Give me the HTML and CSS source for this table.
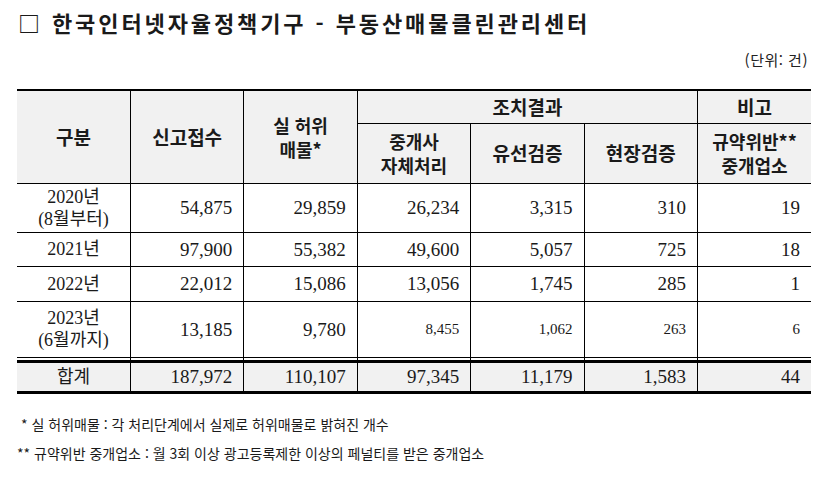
FILE: index.html
```html
<!DOCTYPE html>
<html lang="ko">
<head>
<meta charset="utf-8">
<link rel="stylesheet" href="styles.css">
</head>
<body>
<div class="page">
  <h1 class="title">□ 한국인터넷자율정책기구 - 부동산매물클린관리센터</h1>
  <div class="unit">(단위: 건)</div>
  <table class="grid">
    <colgroup>
      <col class="c1"><col class="c2"><col class="c3"><col class="c4"><col class="c5"><col class="c6"><col class="c7">
    </colgroup>
    <thead>
      <tr class="h1">
        <th rowspan="2">구분</th>
        <th rowspan="2">신고접수</th>
        <th rowspan="2" class="tight">실 허위<br>매물*</th>
        <th colspan="3">조치결과</th>
        <th>비고</th>
      </tr>
      <tr class="h2">
        <th class="tight">중개사<br>자체처리</th>
        <th>유선검증</th>
        <th>현장검증</th>
        <th class="tight">규약위반**<br>중개업소</th>
      </tr>
    </thead>
    <tbody>
      <tr class="r2">
        <td class="yr">2020년<br>(8월부터)</td>
        <td>54,875</td><td>29,859</td><td>26,234</td><td>3,315</td><td>310</td><td>19</td>
      </tr>
      <tr class="r1">
        <td class="yr">2021년</td>
        <td>97,900</td><td>55,382</td><td>49,600</td><td>5,057</td><td>725</td><td>18</td>
      </tr>
      <tr class="r1b">
        <td class="yr">2022년</td>
        <td>22,012</td><td>15,086</td><td>13,056</td><td>1,745</td><td>285</td><td>1</td>
      </tr>
      <tr class="r3">
        <td class="yr">2023년<br>(6월까지)</td>
        <td>13,185</td><td>9,780</td><td class="sm">8,455</td><td class="sm">1,062</td><td class="sm">263</td><td class="sm">6</td>
      </tr>
      <tr class="gap">
        <td></td><td></td><td></td><td></td><td></td><td></td><td></td>
      </tr>
      <tr class="total">
        <td class="yr">합계</td>
        <td>187,972</td><td>110,107</td><td>97,345</td><td>11,179</td><td>1,583</td><td>44</td>
      </tr>
    </tbody>
  </table>
  <div class="notes">
    <p class="note n1">* 실 허위매물 : 각 처리단계에서 실제로 허위매물로 밝혀진 개수</p>
    <p class="note n2">** 규약위반 중개업소 : 월 3회 이상 광고등록제한 이상의 페널티를 받은 중개업소</p>
  </div>
</div>
</body>
</html>
```
FILE: styles.css
```css
html, body {
  margin: 0;
  padding: 0;
  background: #ffffff;
}
.page {
  width: 824px;
  height: 478px;
  padding: 0 13px 0 17px;
  box-sizing: border-box;
  color: #111;
  font-family: "Liberation Serif", "Noto Sans CJK KR", serif;
}
.title {
  margin: 0;
  padding: 8px 0 0 1px;
  height: 34px;
  box-sizing: border-box;
  font-family: "Noto Sans CJK KR", sans-serif;
  font-size: 22px;
  font-weight: 700;
  line-height: 28px;
  letter-spacing: 2.9px;
  color: #1a1a1a;
  white-space: nowrap;
}
.unit {
  text-align: right;
  font-family: "Noto Sans CJK KR", sans-serif;
  font-size: 15px;
  line-height: 18px;
  letter-spacing: 0.5px;
  padding: 17px 3px 0 0;
  height: 55px;
  box-sizing: border-box;
  color: #222;
}
.grid {
  width: 794px;
  border-collapse: collapse;
  table-layout: fixed;
  border-top: 2px solid #000;
  border-bottom: 3px solid #000;
}
.grid th, .grid td {
  border: 1px solid #000;
  padding: 0;
}
.grid tr > :first-child { border-left: none; }
.grid tr > :last-child { border-right: none; }
.grid tr.h2 > :first-child { border-left: 1px solid #000; }
.grid th {
  background: #f1f1f1;
  font-family: "Noto Sans CJK KR", sans-serif;
  font-weight: 700;
  font-size: 19px;
  line-height: 22px;
  color: #1a1a1a;
  text-align: center;
}
.grid th.tight {
  font-size: 18px;
  line-height: 24px;
}
.h1 { height: 33px; }
.h2 { height: 60px; }
.grid td {
  font-size: 19px;
  line-height: 21px;
  text-align: right;
  padding-right: 11px;
  color: #1a1a1a;
}
.grid td.yr {
  text-align: center;
  padding-right: 0;
  font-size: 18px;
  line-height: 22px;
}
.grid td.sm {
  font-size: 15px;
}
.r2 { height: 49px; }
.r1 { height: 34px; }
.r1b { height: 35px; }
.r3 { height: 56px; }
.gap { height: 2px; }
.gap td {
  height: 2px;
  border-top: 1px solid #000;
  border-bottom: 3px solid #000;
}
.total { height: 31px; }
.total td {
  background: #f1f1f1;
}
.notes {
  padding-top: 16px;
  font-family: "Noto Sans CJK KR", sans-serif;
  font-size: 14px;
  color: #1a1a1a;
}
.note {
  margin: 0;
  line-height: 29px;
  white-space: nowrap;
}
.n1 { padding-left: 4px; }
.n2 { padding-left: 0; }
```
